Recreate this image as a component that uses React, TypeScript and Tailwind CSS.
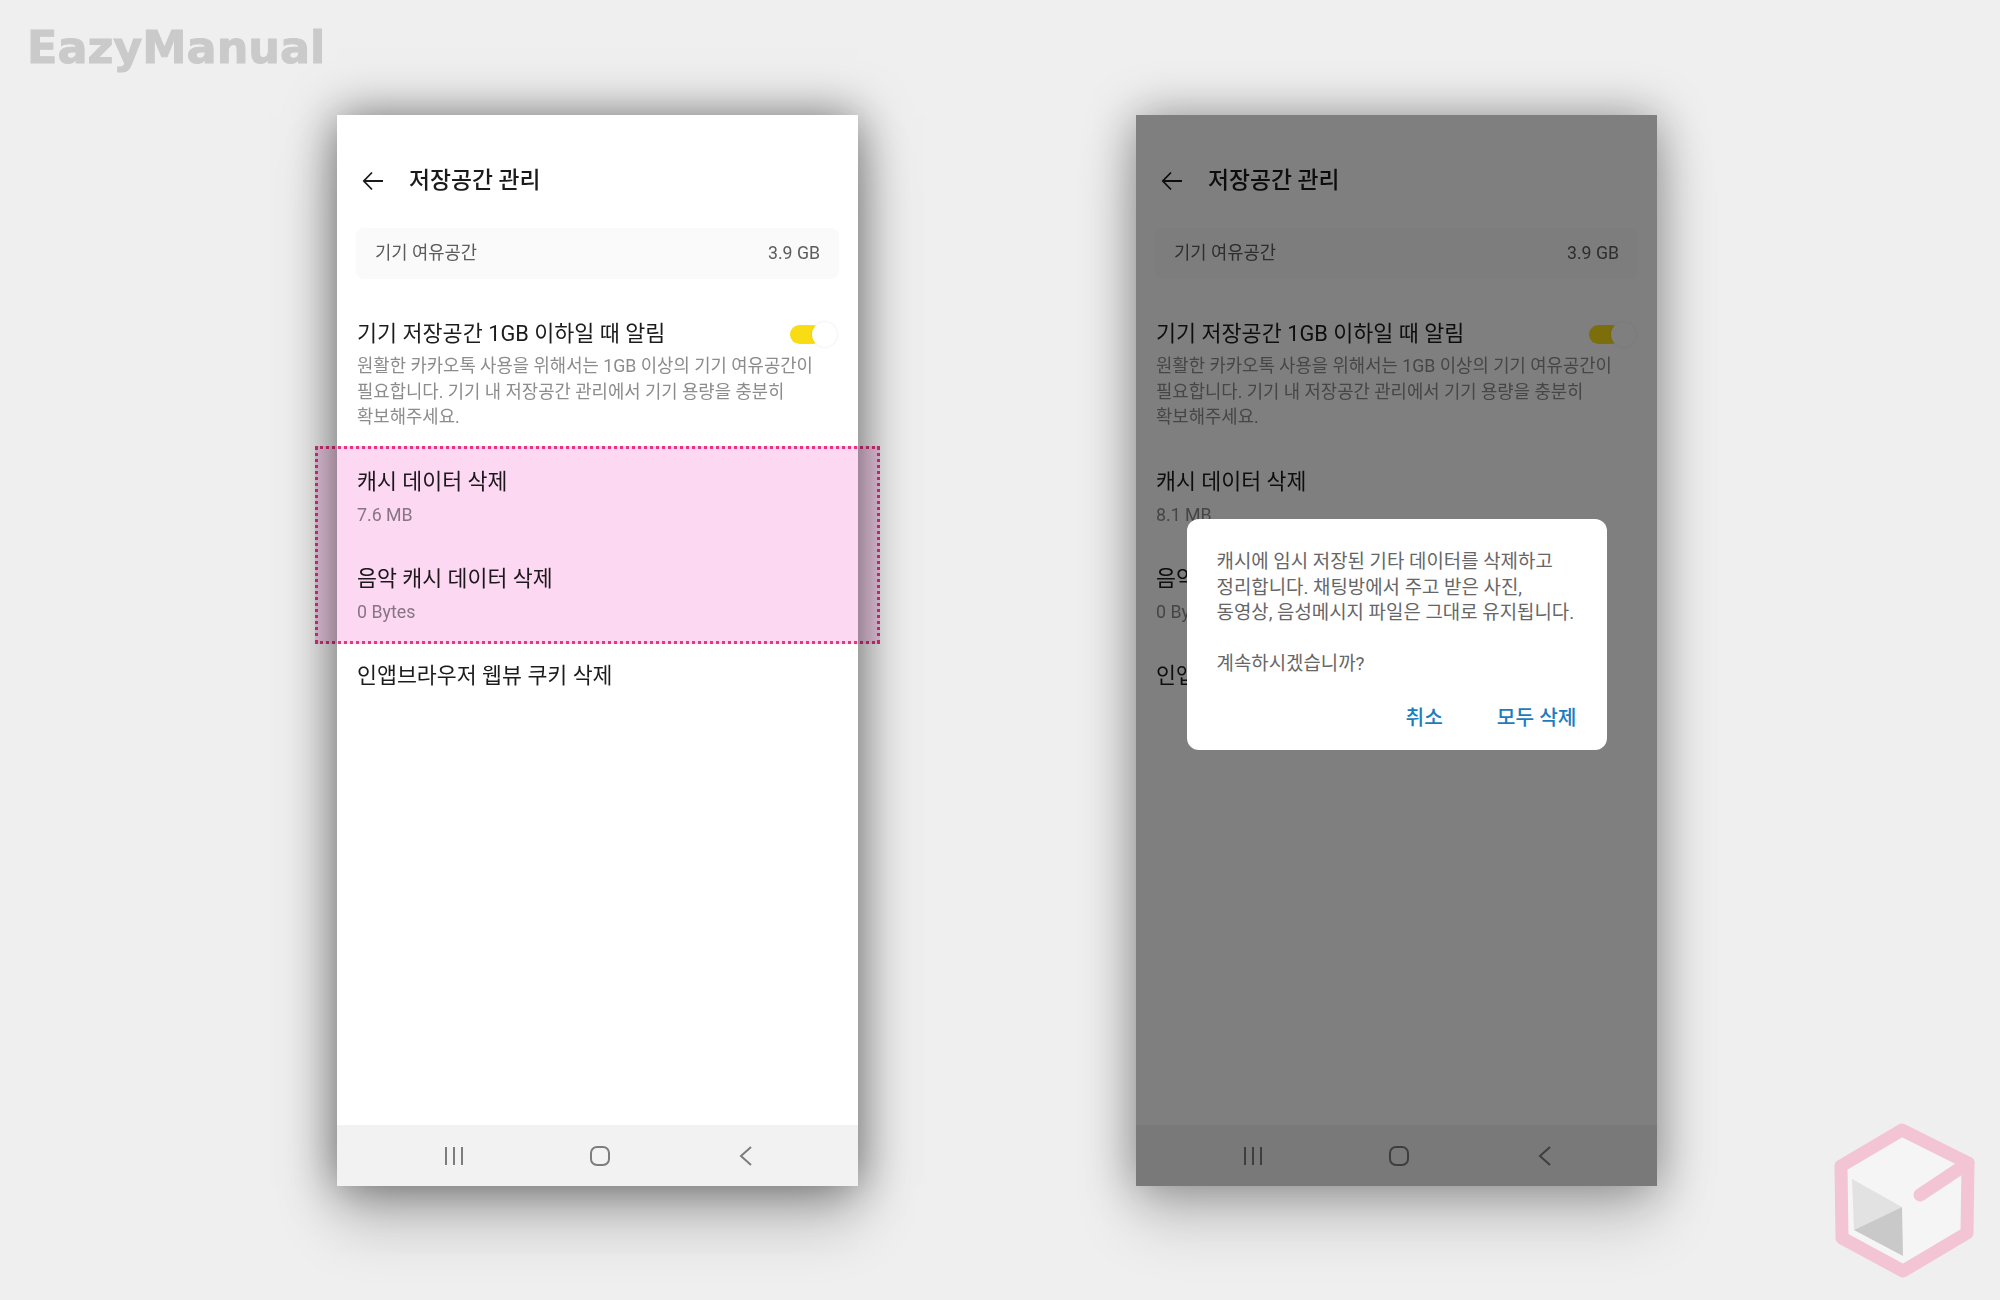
import React from 'react';

const font = "font-['Roboto','Noto_Sans_CJK_KR',sans-serif]";

const BackArrow = () => (
  <svg width="22" height="20" viewBox="0 0 22 20" fill="none" stroke="#1a1a1a" strokeWidth="1.8">
    <path d="M21 10H2M10 1.5L1.8 10l8.2 8.5" />
  </svg>
);

const NavBar = () => (
  <div className="flex h-[61px] items-center justify-center gap-[126px] bg-[#f2f2f2] pl-[5px]">
    <svg width="20" height="20" viewBox="0 0 20 20" stroke="#7d7d7d" strokeWidth="2">
      <path d="M2 1v18M10 1v18M18 1v18" />
    </svg>
    <svg width="20" height="20" viewBox="0 0 20 20" fill="none" stroke="#7d7d7d" strokeWidth="2">
      <rect x="1" y="1" width="18" height="18" rx="6" />
    </svg>
    <svg width="20" height="20" viewBox="0 0 20 20" fill="none" stroke="#7d7d7d" strokeWidth="2">
      <path d="M15 1L5 10l10 9" />
    </svg>
  </div>
);

const Item = ({ title, sub }: { title: string; sub?: string }) => (
  <div className="h-[97px] px-[20px] pt-[14px]">
    <p className="text-[21.7px] leading-[30px] text-[#1c1c1c]">{title}</p>
    {sub && <p className="mt-[6px] text-[17.8px] leading-[24px] text-[#8a8a8a]">{sub}</p>}
  </div>
);

const Screen = ({ cache }: { cache: string }) => (
  <div className="flex h-full flex-col">
    <div className="flex h-[113px] items-center gap-[25px] pl-[25px] pt-[19px]">
      <BackArrow />
      <h1 className="text-[22.8px] font-medium text-[#1a1a1a]">저장공간 관리</h1>
    </div>
    <div className="mx-[19px] flex h-[51px] items-center justify-between rounded-[8px] bg-[#fafafa] px-[19px] text-[17.7px] text-[#5c5c5c]">
      <span>기기 여유공간</span>
      <span>3.9 GB</span>
    </div>
    <div className="relative px-[20px] pt-[39.5px]">
      <p className="text-[21.8px] leading-[30px] text-[#1c1c1c]">기기 저장공간 1GB 이하일 때 알림</p>
      <p className="mt-[5.5px] whitespace-pre-line text-[17.75px] leading-[25.5px] text-[#8c8c8c]">
        {'원활한 카카오톡 사용을 위해서는 1GB 이상의 기기 여유공간이\n필요합니다. 기기 내 저장공간 관리에서 기기 용량을 충분히\n확보해주세요.'}
      </p>
      <div className="absolute left-[453px] top-[46px] h-[19px] w-[32px] rounded-full bg-[#f9dc14]" />
      <div className="absolute left-[475px] top-[43px] h-[25px] w-[25px] rounded-full bg-white shadow-[0_0_3px_rgba(0,0,0,0.1)]" />
    </div>
    <div className="mt-[22px]">
      <Item title="캐시 데이터 삭제" sub={cache} />
      <Item title="음악 캐시 데이터 삭제" sub="0 Bytes" />
      <Item title="인앱브라우저 웹뷰 쿠키 삭제" />
    </div>
    <div className="flex-1" />
    <NavBar />
  </div>
);

const Logo = () => (
  <svg className="absolute left-[1800px] top-[1100px]" width="200" height="200" viewBox="0 0 200 200">
    <polygon points="102,30 168,63 167,133 103,171 42,138 41,66" fill="#f5f5f5" stroke="#f3c4d4" strokeWidth="13" strokeLinejoin="round" />
    <polygon points="52,79 102,107 54,130" fill="#e2e2e2" />
    <polygon points="54,130 102,107 103,156" fill="#c9c9c9" />
    <path d="M120 95L168 63" stroke="#f3c4d4" strokeWidth="13" strokeLinecap="round" />
  </svg>
);

export default function App() {
  return (
    <div className={`relative flex h-[1300px] w-[2000px] gap-[278px] overflow-hidden bg-[#efefef] pl-[337px] pt-[115px] ${font}`}>
      <p className="absolute left-[27px] top-[20px] font-['DejaVu_Sans',sans-serif] text-[44.5px] font-bold leading-[56px] text-[#cacaca] [-webkit-text-stroke:1px_#cacaca]">EazyManual</p>

      <div className="relative h-[1071px] w-[521px] bg-white shadow-[0_0_45px_rgba(0,0,0,0.5),0_35px_60px_rgba(0,0,0,0.2)]">
        <Screen cache="7.6 MB" />
        <div className="absolute left-[-22px] top-[331px] h-[198px] w-[565px] border-[3px] border-dotted border-[#e8357f] bg-[#fcd8f3] mix-blend-multiply" />
      </div>

      <div className="relative h-[1071px] w-[521px] bg-white shadow-[0_0_45px_rgba(0,0,0,0.38),0_35px_60px_rgba(0,0,0,0.16)]">
        <Screen cache="8.1 MB" />
        <div className="absolute inset-0 flex justify-center bg-black/50 pt-[404px]">
          <div className="h-[231px] w-[420px] rounded-[12px] bg-white px-[30px] pt-[30px]">
            <p className="whitespace-pre-line text-[18.9px] leading-[25.5px] text-[#666666]">
              {'캐시에 임시 저장된 기타 데이터를 삭제하고\n정리합니다. 채팅방에서 주고 받은 사진,\n동영상, 음성메시지 파일은 그대로 유지됩니다.\n\n계속하시겠습니까?'}
            </p>
            <div className="mt-[26px] flex justify-end gap-[54px] text-[20.3px] font-medium text-[#1b7dc0]">
              <span>취소</span>
              <span>모두 삭제</span>
            </div>
          </div>
        </div>
      </div>

      <Logo />
    </div>
  );
}
